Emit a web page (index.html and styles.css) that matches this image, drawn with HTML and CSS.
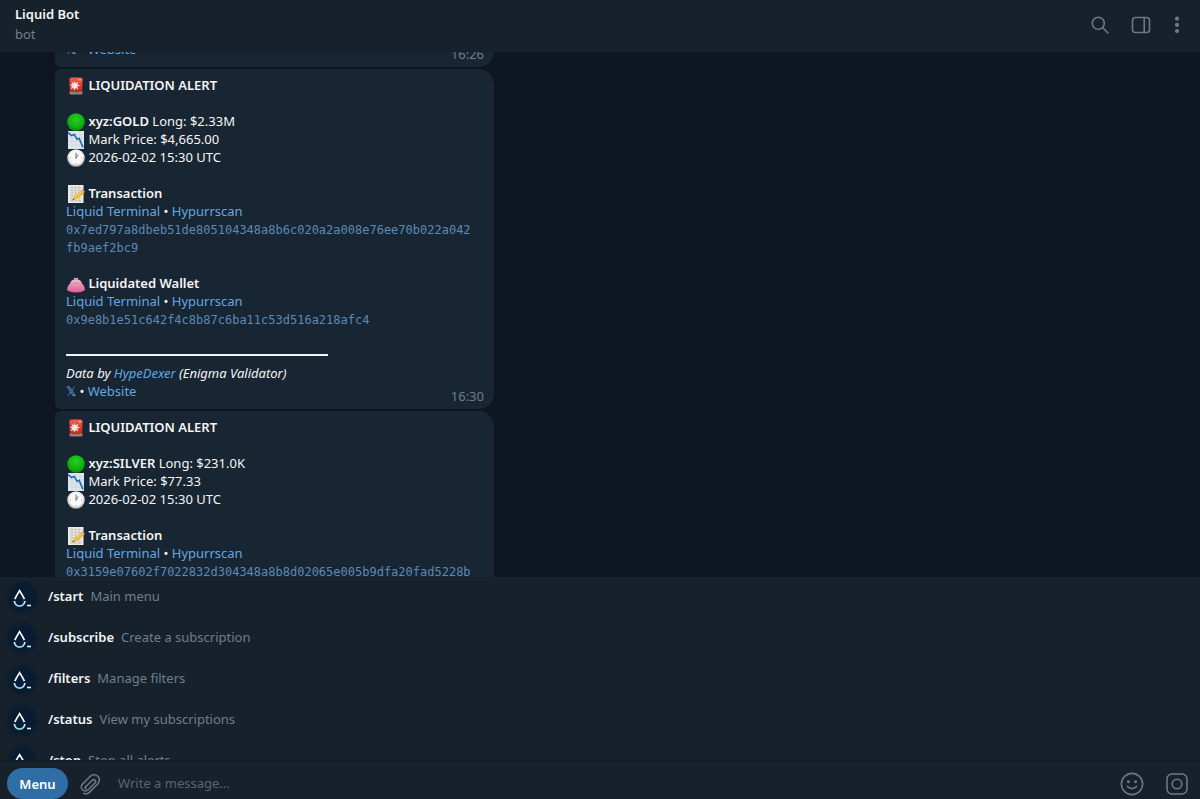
FILE: index.html
```
<!DOCTYPE html>
<html lang="en">
<head>
    <meta charset="UTF-8">
    <meta name="viewport" content="width=device-width, initial-scale=1.0">
    <title>Liquid Bot</title>
    <link rel="stylesheet" href="styles.css">
</head>
<body>

    <!-- Shared drawings -->
    <svg class="sprite" aria-hidden="true">
        <defs>
            <linearGradient id="sirenRed" x1="0" y1="0" x2="0" y2="1">
                <stop offset="0" stop-color="#f0604c"/>
                <stop offset="1" stop-color="#c9231c"/>
            </linearGradient>
            <radialGradient id="greenBall" cx="0.5" cy="0.35" r="0.65">
                <stop offset="0" stop-color="#27cf22"/>
                <stop offset="0.6" stop-color="#14b414"/>
                <stop offset="1" stop-color="#079307"/>
            </radialGradient>
            <radialGradient id="clockRim" cx="0.5" cy="0.4" r="0.6">
                <stop offset="0.6" stop-color="#f2f2f2"/>
                <stop offset="1" stop-color="#a9a9a9"/>
            </radialGradient>
            <linearGradient id="purse" x1="0" y1="0" x2="0" y2="1">
                <stop offset="0" stop-color="#f7a3c4"/>
                <stop offset="1" stop-color="#dd5e97"/>
            </linearGradient>
            <radialGradient id="avatar">
                <stop offset="0" stop-color="#08213d"/>
                <stop offset="0.6" stop-color="#071b31"/>
                <stop offset="1" stop-color="#101f2d"/>
            </radialGradient>
            <linearGradient id="drop" x1="0" y1="0" x2="0" y2="1">
                <stop offset="0" stop-color="#e6f5fc"/>
                <stop offset="1" stop-color="#8fd0f0"/>
            </linearGradient>
        </defs>
        <symbol id="siren" viewBox="0 0 19 18">
            <rect x="3.5" y="14" width="13" height="3.6" rx="1.4" fill="#8b8586"/>
            <path d="M3.4 2.6Q3.4 .6 5.4 .6H14.4Q16.6 .6 16.6 2.6L16.2 14.4Q10 16 3.8 14.4Z" fill="url(#sirenRed)"/>
            <path d="M12 2H15.4V3.4H12.8Z" fill="#ff9b88"/>
            <path d="M8.6 3.6 9.5 6.3 12.6 4.8 11.2 7.5 14.2 8.5 11.2 9.6 12.4 12.6 9.6 11 8.4 13.8 7.3 11 4.6 12 6 9.3 3.8 7.9 6.5 7.2 5.7 4.7 8 6.2Z" fill="#ffe2da"/>
        </symbol>
        <symbol id="green" viewBox="0 0 19 18">
            <circle cx="10" cy="9" r="8.8" fill="url(#greenBall)"/>
        </symbol>
        <symbol id="chart" viewBox="0 0 19 18">
            <rect x="2" y="0" width="16" height="18" fill="#dfe7ef"/>
            <path d="M2 3.5H18M2 7H18M2 10.5H18M2 14H18M6 0V18M10 0V18M14 0V18" stroke="#c5d1de" stroke-width=".6"/>
            <path d="M2 1.4 5.5 4.6 8.2 3.4 11.2 8.4 13.2 7.4 17 16.4" fill="none" stroke="#2368b8" stroke-width="1.6"/>
        </symbol>
        <symbol id="clock" viewBox="0 0 19 18">
            <circle cx="10" cy="9" r="8.8" fill="url(#clockRim)"/>
            <circle cx="10" cy="9" r="6.8" fill="#f8f8f8"/>
            <path d="M10 9.5V3.6M10 9.5 12 5.5" stroke="#777" stroke-width="1"/>
            <path d="M10 15.2V14M3.8 9H5M15 9H16.2" stroke="#aaa" stroke-width=".8"/>
        </symbol>
        <symbol id="memo" viewBox="0 0 19 18">
            <rect x="2" y="0" width="15.5" height="18" fill="#ecebe6"/>
            <path d="M3.5 2.8H16M3.5 5.4H16M3.5 8H16M3.5 10.6H16M3.5 13.2H16M3.5 15.8H16M6 1V17M9.5 1V17M13 1V17" stroke="#b4b4b0" stroke-width=".6"/>
            <path d="M6.6 15.2 8 11.6 15.4 5.2 18 8 10.4 14.2Z" fill="#f2b632"/>
            <path d="M8.8 12.6 16.4 6.2" stroke="#fbdc75" stroke-width="1"/>
            <path d="M15.4 5.2 16.6 4.2 19 6.8 18 8Z" fill="#e68a86"/>
            <path d="M6.6 15.2 7.3 13.4 8.4 14.7Z" fill="#333"/>
        </symbol>
        <symbol id="wallet" viewBox="0 0 19 18">
            <path d="M4.4 8Q10 4.6 15.6 8Q19 11.5 18.8 14.6Q18.4 17.4 10 17.4Q1.6 17.4 1.2 14.6Q1 11.5 4.4 8Z" fill="url(#purse)"/>
            <path d="M4.2 8.4Q4.6 4.4 10 4.2Q15.4 4.4 15.8 8.4Q10 6.6 4.2 8.4Z" fill="#f3b2cb"/>
            <path d="M4.2 8.6Q10 6.6 15.8 8.6" fill="none" stroke="#a9a5aa" stroke-width="1"/>
            <circle cx="9" cy="3.7" r="1" fill="#c9c4ca"/>
            <circle cx="11" cy="3.7" r="1" fill="#c9c4ca"/>
        </symbol>
        <symbol id="bot" viewBox="0 0 33 33">
            <circle cx="16.5" cy="16.5" r="16.5" fill="url(#avatar)"/>
            <path d="M8.8 18.2Q10.2 15 13.6 9.6Q17 15 18.4 18.2" fill="none" stroke="#fff" stroke-width="1.7"/>
            <path d="M8.4 20A5.2 5.2 0 0 0 18.8 20" fill="none" stroke="url(#drop)" stroke-width="1.7"/>
            <path d="M21 24.5H25" stroke="#e6f5fc" stroke-width="1.6"/>
        </symbol>
    </svg>

    <div class="app">
        <header class="top-bar">
            <div class="peer">
                <h1>Liquid Bot</h1>
                <p>bot</p>
            </div>
            <div class="top-actions">
                <button type="button" aria-label="Search">
                    <svg width="20" height="20" viewBox="0 0 20 20"><circle cx="8.3" cy="8.3" r="6" /><path d="M12.8 12.8 18 18"/></svg>
                </button>
                <button type="button" aria-label="Toggle side panel">
                    <svg width="20" height="20" viewBox="0 0 20 20"><rect x="1.5" y="2.5" width="17" height="15" rx="3"/><path d="M13.2 2.5V17.5"/></svg>
                </button>
                <button type="button" aria-label="More">
                    <svg class="dots" width="20" height="20" viewBox="0 0 20 20"><circle cx="10" cy="3.7" r="2.1"/><circle cx="10" cy="9.9" r="2.1"/><circle cx="10" cy="16.1" r="2.1"/></svg>
                </button>
            </div>
        </header>

        <main class="chat">
            <article class="message clipped">
                <div class="message-footer">
                    <p><a href="#">𝕏</a> • <a href="#">Website</a></p>
                    <time>16:26</time>
                </div>
            </article>

            <article class="message">
                <p><svg class="emoji"><use href="#siren"/></svg> <b>LIQUIDATION ALERT</b></p>
                <br>
                <p><svg class="emoji"><use href="#green"/></svg> <b>xyz:GOLD</b> Long: $2.33M</p>
                <p><svg class="emoji"><use href="#chart"/></svg> Mark Price: $4,665.00</p>
                <p><svg class="emoji"><use href="#clock"/></svg> 2026-02-02 15:30 UTC</p>
                <br>
                <p><svg class="emoji"><use href="#memo"/></svg> <b>Transaction</b></p>
                <p><a href="#">Liquid Terminal</a> • <a href="#">Hypurrscan</a></p>
                <code>0x7ed797a8dbeb51de805104348a8b6c020a2a008e76ee70b022a042<br>fb9aef2bc9</code>
                <br>
                <p><svg class="emoji"><use href="#wallet"/></svg> <b>Liquidated Wallet</b></p>
                <p><a href="#">Liquid Terminal</a> • <a href="#">Hypurrscan</a></p>
                <code>0x9e8b1e51c642f4c8b87c6ba11c53d516a218afc4</code>
                <br>
                <hr>
                <p><i>Data by <a href="#">HypeDexer</a> (Enigma Validator)</i></p>
                <div class="message-footer">
                    <p><a href="#">𝕏</a> • <a href="#">Website</a></p>
                    <time>16:30</time>
                </div>
            </article>

            <article class="message">
                <p><svg class="emoji"><use href="#siren"/></svg> <b>LIQUIDATION ALERT</b></p>
                <br>
                <p><svg class="emoji"><use href="#green"/></svg> <b>xyz:SILVER</b> Long: $231.0K</p>
                <p><svg class="emoji"><use href="#chart"/></svg> Mark Price: $77.33</p>
                <p><svg class="emoji"><use href="#clock"/></svg> 2026-02-02 15:30 UTC</p>
                <br>
                <p><svg class="emoji"><use href="#memo"/></svg> <b>Transaction</b></p>
                <p><a href="#">Liquid Terminal</a> • <a href="#">Hypurrscan</a></p>
                <code>0x3159e07602f7022832d304348a8b8d02065e005b9dfa20fad5228b</code>
            </article>
        </main>

        <ul class="commands">
            <li><button type="button"><svg class="avatar"><use href="#bot"/></svg><b>/start</b><span>Main menu</span></button></li>
            <li><button type="button"><svg class="avatar"><use href="#bot"/></svg><b>/subscribe</b><span>Create a subscription</span></button></li>
            <li><button type="button"><svg class="avatar"><use href="#bot"/></svg><b>/filters</b><span>Manage filters</span></button></li>
            <li><button type="button"><svg class="avatar"><use href="#bot"/></svg><b>/status</b><span>View my subscriptions</span></button></li>
            <li><button type="button"><svg class="avatar"><use href="#bot"/></svg><b>/stop</b><span>Stop all alerts</span></button></li>
        </ul>

        <form class="composer">
            <button type="button" class="menu-button">Menu</button>
            <button type="button" aria-label="Attach file">
                <svg width="24" height="24" viewBox="0 0 24 24"><path d="M7.2 15.2 14.2 8.2A1.9 1.9 0 0 1 17 11L10.2 17.8A4 4 0 0 1 4.5 12.1L12.3 4.3A5.3 5.3 0 0 1 19.9 11.8L11.6 20.1Q8.8 22.9 5.6 21.4"/><path d="M7.2 15.2Q6.8 16.4 8 16.6"/></svg>
            </button>
            <input type="text" placeholder="Write a message..." aria-label="Write a message">
            <button type="button" aria-label="Emoji">
                <svg width="24" height="24" viewBox="0 0 24 24"><circle cx="12" cy="12" r="10.6"/><path d="M7.4 14.4Q12 18.8 16.6 14.4"/><circle class="fill" cx="8.4" cy="9.8" r="1.5"/><circle class="fill" cx="15.6" cy="9.8" r="1.5"/></svg>
            </button>
            <button type="button" aria-label="Record video message">
                <svg width="24" height="24" viewBox="0 0 24 24"><rect x="2" y="2" width="20" height="20" rx="5"/><circle cx="12" cy="12" r="4.8"/></svg>
            </button>
        </form>
    </div>

</body>
</html>
```
FILE: styles.css
```
* {
    box-sizing: border-box;
}

body {
    margin: 0;
    font-family: "Noto Sans", "Open Sans", sans-serif;
    font-size: 13px;
    line-height: 18px;
    color: #f5f5f5;
    background-color: #0e1621;
}

h1, p, ul {
    margin: 0;
    padding: 0;
}

b, h1 {
    font-weight: 600;
}

a {
    color: #64a8e0;
    text-decoration: none;
}

button {
    padding: 0;
    border: none;
    background: none;
    color: inherit;
    font: inherit;
    cursor: pointer;
}

.sprite {
    position: absolute;
    width: 0;
    height: 0;
}

.app {
    display: flex;
    flex-direction: column;
    height: 100vh;
    overflow: hidden;
}

/* Header */
.top-bar {
    display: flex;
    justify-content: space-between;
    align-items: center;
    padding: 4px 13px 8px 15px;
    background-color: #17212b;
}

.peer h1 {
    font-size: 13px;
    line-height: 20px;
}

.peer p {
    line-height: 20px;
    color: #6d7f8f;
}

.top-actions {
    display: flex;
    gap: 16px;
    padding-top: 2px;
}

.top-actions button,
.composer button {
    display: flex;
}

.top-actions button:nth-child(1) {
    margin-right: 5px;
}

.top-actions svg,
.composer svg {
    fill: none;
    stroke: #6c7883;
    stroke-width: 1.6;
    stroke-linecap: round;
}

.top-actions .dots,
.composer .fill {
    fill: #6c7883;
    stroke: none;
}

/* Messages */
.chat {
    flex: 1;
    min-height: 0;
    overflow: hidden;
    padding-left: 55px;
}

.message {
    width: 439px;
    max-width: 100%;
    margin-bottom: 2px;
    padding: 7px 10px 9px 11px;
    border-radius: 6px 15px 15px 6px;
    background-color: #182533;
}

.message.clipped {
    margin-top: -19px;
}

.message code {
    display: block;
    margin-bottom: -1px;
    padding-top: 1px;
    font-family: "DejaVu Sans Mono", monospace;
    font-size: 12px;
    color: #5b8ab5;
}

.message hr {
    width: 262px;
    height: 2px;
    margin: 8px 0;
    border: none;
    background-color: #f5f5f5;
}

.message-footer {
    display: flex;
    justify-content: space-between;
}

.message-footer time {
    margin: 5px 0 -5px;
    color: #6d7f8f;
}

.emoji {
    width: 19px;
    height: 18px;
    margin: 1px 0 -1px;
    vertical-align: top;
}

/* Bot commands */
.commands {
    height: 183px;
    overflow: hidden;
    list-style: none;
    background-color: #17212b;
}

.commands button {
    display: flex;
    align-items: center;
    width: 100%;
    height: 41px;
    padding-left: 6px;
}

.commands b,
.commands span {
    padding-bottom: 3px;
}

.commands b {
    margin: 0 7px 0 9px;
}

.commands span {
    color: #6d7f8f;
}

.avatar {
    width: 33px;
    height: 33px;
}

/* Message field */
.composer {
    display: flex;
    align-items: center;
    height: 39px;
    padding: 7px 11px 0 7px;
    border-top: 1px solid #121a23;
    background-color: #17212b;
}

.composer .menu-button {
    justify-content: center;
    align-items: center;
    width: 61px;
    height: 31px;
    margin-right: 10px;
    border-radius: 16px;
    background-color: #2f6ea5;
    font-weight: 600;
    color: #fff;
}

.composer input {
    flex: 1;
    min-width: 0;
    margin-left: 16px;
    padding: 0 0 2px;
    border: none;
    outline: none;
    background: none;
    color: #f5f5f5;
    font: inherit;
}

.composer input::placeholder {
    color: #576573;
    opacity: 1;
}

.composer input ~ button {
    margin-left: 21px;
}
```
